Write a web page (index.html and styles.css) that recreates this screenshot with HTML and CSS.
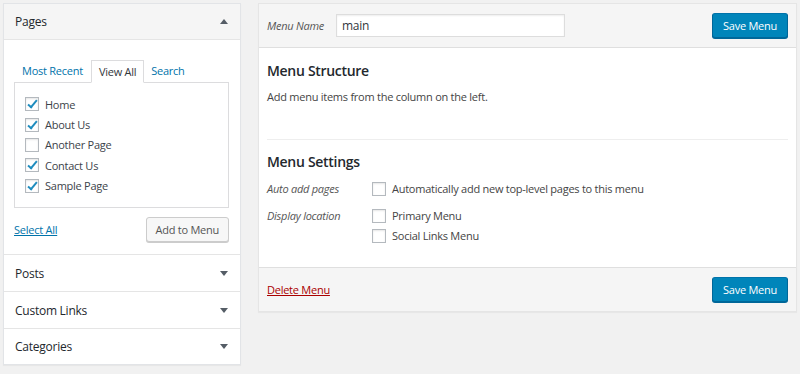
FILE: index.html
```html
<!DOCTYPE html>
<html>
<head>
<meta charset="utf-8">
<link rel="stylesheet" href="styles.css">
</head>
<body>
<div class="wrap">
  <div class="side">
    <div class="acc open">
      <div class="acc-title"><span>Pages</span><span class="tri up"></span></div>
      <div class="acc-body">
        <div class="tabs">
          <span class="tab">Most Recent</span>
          <span class="tab active">View All</span>
          <span class="tab">Search</span>
        </div>
        <div class="tabpanel">
          <label class="item"><span class="cb checked"></span>Home</label>
          <label class="item"><span class="cb checked"></span>About Us</label>
          <label class="item"><span class="cb"></span>Another Page</label>
          <label class="item"><span class="cb checked"></span>Contact Us</label>
          <label class="item"><span class="cb checked"></span>Sample Page</label>
        </div>
        <div class="acc-actions">
          <a class="link" href="#">Select All</a>
          <span class="btn">Add to Menu</span>
        </div>
      </div>
    </div>
    <div class="acc"><div class="acc-title"><span>Posts</span><span class="tri down"></span></div></div>
    <div class="acc"><div class="acc-title"><span>Custom Links</span><span class="tri down"></span></div></div>
    <div class="acc last"><div class="acc-title"><span>Categories</span><span class="tri down"></span></div></div>
  </div>

  <div class="main">
    <div class="main-head">
      <span class="label-i">Menu Name</span>
      <span class="input">main</span>
      <span class="btn primary">Save Menu</span>
    </div>
    <div class="main-body">
      <h3 class="h">Menu Structure</h3>
      <p class="desc">Add menu items from the column on the left.</p>
      <div class="sep"></div>
      <h3 class="h">Menu Settings</h3>
      <div class="setting">
        <span class="label-i slabel">Auto add pages</span>
        <div class="opts">
          <label class="opt"><span class="cb"></span>Automatically add new top-level pages to this menu</label>
        </div>
      </div>
      <div class="setting">
        <span class="label-i slabel">Display location</span>
        <div class="opts">
          <label class="opt"><span class="cb"></span>Primary Menu</label>
          <label class="opt"><span class="cb"></span>Social Links Menu</label>
        </div>
      </div>
    </div>
    <div class="main-foot">
      <a class="del" href="#">Delete Menu</a>
      <span class="btn primary">Save Menu</span>
    </div>
  </div>
</div>
</body>
</html>
```

FILE: styles.css
```css
html, body { margin: 0; padding: 0; }
body {
  background: #f1f1f1;
  font-family: "Open Sans", "Noto Sans", sans-serif;
  font-size: 11px;
  letter-spacing: -0.25px;
  color: #444;
  width: 800px;
  height: 374px;
  overflow: hidden;
}
.wrap {
  display: flex;
  align-items: flex-start;
  padding: 3px 3px 0 3px;
  gap: 17px;
}
.side {
  width: 238px;
  background: #fff;
  border: 1px solid #e2e4e7;
  box-shadow: 0 1px 1px rgba(0,0,0,0.04);
  box-sizing: border-box;
}
.acc { border-top: 1px solid #e5e5e5; }
.acc:first-child { border-top: none; }
.acc-title {
  height: 36px;
  display: flex;
  align-items: center;
  justify-content: space-between;
  padding: 0 12px 0 11px;
  font-size: 12px;
  color: #23282d;
  box-sizing: border-box;
}
.acc.open .acc-title {
  background: #f5f5f5;
  border-bottom: 1px solid #e5e5e5;
}
.acc.last .acc-title { height: 35px; }
.tri {
  width: 0; height: 0;
  border-left: 4px solid transparent;
  border-right: 4px solid transparent;
}
.tri.up { border-bottom: 5px solid #555d66; }
.tri.down { border-top: 5px solid #555d66; }
.acc-body { padding: 20px 11px 12px 10px; }
.tabs {
  display: flex;
  align-items: flex-end;
  padding-left: 8px;
}
.tab {
  color: #0073aa;
  padding: 3px 0 4px 0;
  font-size: 11px;
  line-height: 14px;
}
.tab:first-child { margin-right: 8px; }
.tab.active {
  color: #32373c;
  background: #fff;
  border: 1px solid #dcdcde;
  border-bottom: 1px solid #fff;
  padding: 4px 7px 3px 7px;
  margin-right: 7px;
  margin-bottom: -1px;
  position: relative;
  z-index: 1;
}
.tabpanel {
  border: 1px solid #dcdcde;
  padding: 11px 10px 4px 10px;
  height: 126px;
  box-sizing: border-box;
}
.item {
  display: flex;
  align-items: center;
  height: 20.4px;
  color: #3c434a;
  font-size: 11px;
}
.cb {
  width: 12px; height: 12px;
  border: 1px solid #b4b9be;
  background: #fff;
  box-shadow: inset 0 1px 2px rgba(0,0,0,0.1);
  display: inline-block;
  margin-right: 6px;
  flex: none;
  position: relative;
  box-sizing: content-box;
}
.cb.checked::after {
  content: "";
  position: absolute;
  left: 4px; top: 0px;
  width: 3px; height: 8px;
  border-right: 2px solid #1e8cbe;
  border-bottom: 2px solid #1e8cbe;
  transform: rotate(40deg);
}
.acc-actions {
  display: flex;
  justify-content: space-between;
  align-items: center;
  margin-top: 9px;
}
.link { color: #0073aa; text-decoration: underline; font-size: 11px; }
.btn {
  display: inline-flex;
  align-items: center;
  justify-content: center;
  height: 25px;
  padding: 0 9px;
  box-sizing: border-box;
  border: 1px solid #ccc;
  background: #f7f7f7;
  box-shadow: 0 1px 0 #ccc;
  border-radius: 3px;
  color: #555;
  font-size: 11px;
}
.btn.primary {
  background: #0085ba;
  border-color: #0073aa #006799 #006799;
  box-shadow: 0 1px 0 #006799;
  color: #fff;
  padding: 0 10px;
  height: 25px;
}

.main {
  flex: none;
  width: 539px;
  background: #fff;
  border: 1px solid #e5e5e5;
  box-shadow: 0 1px 1px rgba(0,0,0,0.04);
  box-sizing: border-box;
}
.main-head {
  display: flex;
  align-items: center;
  background: #f5f5f5;
  border-bottom: 1px solid #dfdfdf;
  height: 44px;
  padding: 0 8px 0 8px;
  box-sizing: border-box;
}
.label-i { font-style: italic; color: #555; font-size: 11px; }
.main-head .label-i { width: 69px; }
.input {
  width: 229px;
  height: 23px;
  box-sizing: border-box;
  border: 1px solid #ddd;
  box-shadow: inset 0 1px 2px rgba(0,0,0,0.07);
  background: #fff;
  padding: 0 5px;
  display: flex;
  align-items: center;
  color: #32373c;
  font-size: 12px;
}
.main-head .btn { margin-left: auto; }
.main-body { padding: 14px 8px 24px 8px; }
.h {
  margin: 0;
  font-size: 14px;
  font-weight: 600;
  letter-spacing: -0.3px;
  color: #23282d;
  line-height: 18px;
}
.desc { margin: 10px 0 0 0; color: #444; font-size: 11px; line-height: 14px; }
.sep { border-top: 1px solid #eee; margin: 35px 0 13px 0; }
.setting { display: flex; margin-top: 12px; }
.h + .setting { margin-top: 10px; }
.slabel { width: 105px; flex: none; line-height: 15px; }
.opts { display: flex; flex-direction: column; gap: 5px; }
.opt { display: flex; align-items: center; color: #444; font-size: 11px; line-height: 15px; }
.main-foot {
  display: flex;
  align-items: center;
  justify-content: space-between;
  background: #f5f5f5;
  border-top: 1px solid #dfdfdf;
  height: 44px;
  padding: 0 8px;
  box-sizing: border-box;
}
.del { color: #a00; text-decoration: underline; font-size: 11px; }
```
